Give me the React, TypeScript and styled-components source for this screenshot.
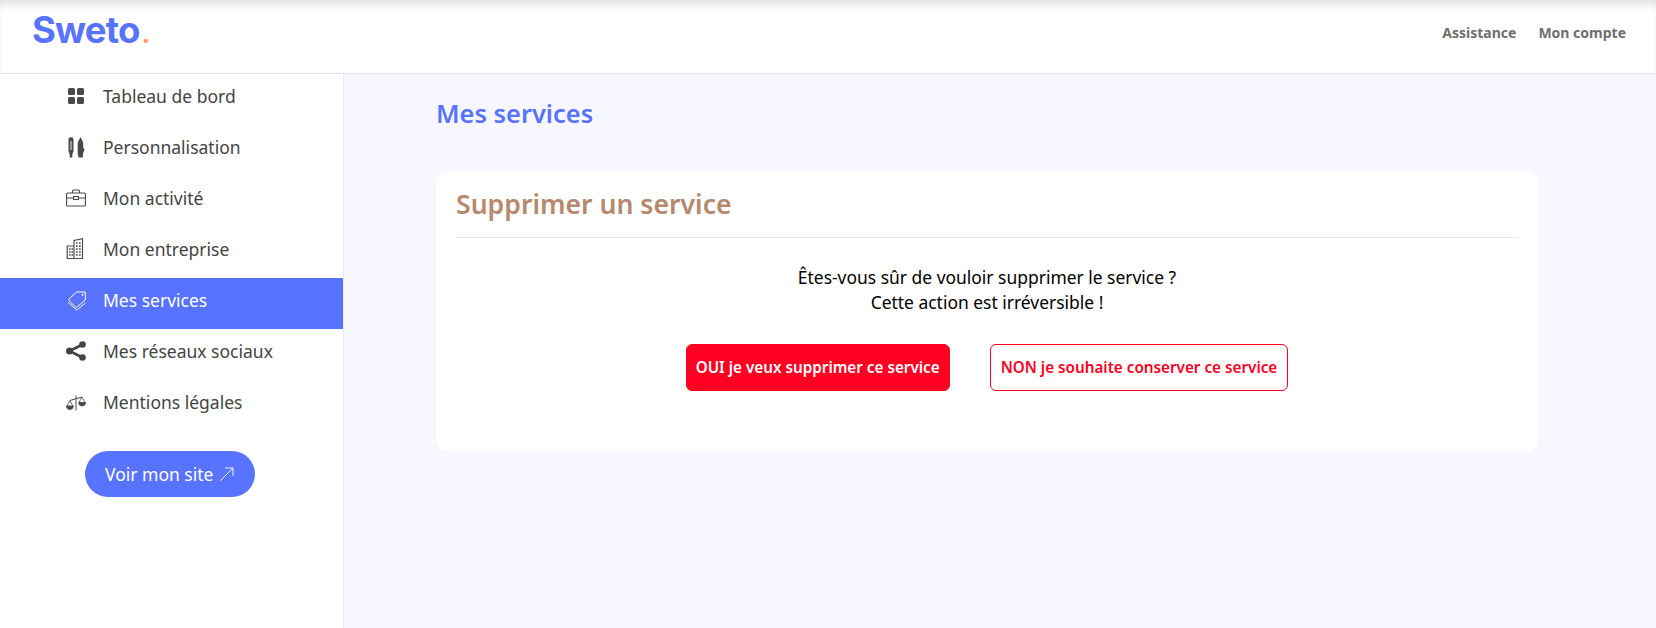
import React from "react";
import styled, { createGlobalStyle } from "styled-components";

const Global = createGlobalStyle`
  html, body { margin: 0; padding: 0; height: 100%; background: #f6f7ff; }
  body { font-family: "Noto Sans", "Open Sans", sans-serif; }
  #root { height: 100%; }
  * { box-sizing: border-box; }
`;

const Page = styled.div`
  width: 1656px;
  height: 628px;
  display: flex;
  flex-direction: column;
  overflow: hidden;
  background: #f6f7ff;
`;
const Header = styled.header`
  height: 74px;
  flex: none;
  background: #fff;
  border-bottom: 1px solid #e4e4e8;
  box-shadow: inset 0 8px 10px -4px rgba(0, 0, 0, 0.14);
  display: flex;
  align-items: center;
  justify-content: space-between;
  padding: 0 30px 10px 32px;
`;
const Logo = styled.div`
  font-family: "Inter", sans-serif;
  font-weight: 700;
  font-size: 36.5px;
  line-height: 40px;
  letter-spacing: -0.8px;
  color: #5773ff;
  span { color: #ff9a5c; font-size: 26px; letter-spacing: 0; margin-left: 2px; }
`;
const TopNav = styled.nav`
  display: flex;
  gap: 22px;
  padding-top: 1px;
`;
const TopLink = styled.a`
  font-size: 14px;
  font-weight: 700;
  color: #6f6f6f;
`;
const Body = styled.div`
  flex: 1;
  display: flex;
  min-height: 0;
`;
const Sidebar = styled.aside`
  width: 344px;
  flex: none;
  background: #fff;
  border-right: 1px solid #e9eaf6;
  display: flex;
  flex-direction: column;
`;
const Item = styled.a<{ $active?: boolean }>`
  height: 51px;
  display: flex;
  align-items: center;
  padding: 0 0 7px 66px;
  font-size: 17.5px;
  font-weight: 400;
  color: ${(p) => (p.$active ? "#fff" : "#444")};
  background: ${(p) => (p.$active ? "#5773ff" : "transparent")};
`;
const IconSlot = styled.span`
  width: 37px;
  flex: none;
  display: flex;
  svg { display: block; }
`;
const SiteButton = styled.a`
  align-self: flex-start;
  margin: 20px 0 0 85px;
  width: 170px;
  height: 46px;
  border-radius: 23px;
  background: #5773ff;
  color: #fff;
  font-size: 17.5px;
  font-weight: 400;
  display: flex;
  align-items: center;
  gap: 6px;
  padding-left: 20px;
`;
const Main = styled.main`
  flex: 1;
  padding: 20px 118px 0 92px;
`;
const PageTitle = styled.h1`
  margin: 0 0 32px;
  height: 45px;
  font-size: 25.4px;
  line-height: 38px;
  font-weight: 600;
  color: #5773ff;
`;
const Card = styled.section`
  height: 280px;
  background: #fff;
  border-radius: 12px;
  padding: 0 20px;
  display: flex;
  flex-direction: column;
`;
const CardTitle = styled.h2`
  margin: 0;
  height: 67px;
  border-bottom: 1px solid #e8e8e8;
  font-size: 26.6px;
  line-height: 66px;
  font-weight: 600;
  color: #b6886e;
`;
const Message = styled.p`
  margin: 27px 0 0;
  text-align: center;
  font-size: 17.45px;
  line-height: 25px;
  color: #000;
`;
const Actions = styled.div`
  display: flex;
  justify-content: center;
  gap: 40px;
  margin-top: 29px;
`;
const Action = styled.button<{ $filled?: boolean }>`
  height: 47px;
  padding: 0 ${(p) => (p.$filled ? "9px" : "10px")} 1px;
  border-radius: 6px;
  border: 1px solid #ff0023;
  background: ${(p) => (p.$filled ? "#ff0023" : "#fff")};
  color: ${(p) => (p.$filled ? "#fff" : "#ff0023")};
  font-family: inherit;
  font-size: 15.25px;
  font-weight: 600;
  white-space: nowrap;
`;

const Grid = () => (
  <svg width="20" height="20" viewBox="0 0 20 20" fill="#4a4a4a">
    <rect x="2" y="2" width="7" height="7" rx="1.500" />
    <rect x="11" y="2" width="7" height="7" rx="1.500" />
    <rect x="2" y="11" width="7" height="7" rx="1.500" />
    <rect x="11" y="11" width="7" height="7" rx="1.500" />
  </svg>
);
const Pens = () => (
  <svg width="20" height="22" viewBox="0 -0.500 20 22" fill="#4a4a4a">
    <path d="M2.500 3C2.500 1.500 3.500 .8 5 .8s2.500.7 2.500 2.200v11.500L6.300 18v3H3.700v-3L2.500 14.500z" />
    <path d="M4 4.500h2v9H4z" fill="#9a9a9a" />
    <path d="M14.500 .5l2.700 5.500V11l1.300 2-1.300 3.500-.5 4.500h-4.200l-.8-4V6z" />
  </svg>
);
const Briefcase = () => (
  <svg width="20" height="18" viewBox="0 0 20 18" fill="none" stroke="#4a4a4a" strokeWidth="1.100">
    <rect x="0.600" y="4" width="18.800" height="13" rx="1" />
    <path d="M6.500 4V2a1 1 0 0 1 1-1h5a1 1 0 0 1 1 1v2M0.600 9h7M12.400 9h7" />
    <rect x="7.600" y="7.500" width="4.800" height="3" />
  </svg>
);
const Building = () => (
  <svg width="18" height="22" viewBox="0 0 18 22" fill="none" stroke="#4f4f4f" strokeWidth="1.200">
    <path d="M8 20.500V2.500L16.500 0.700V20.500z" />
    <path d="M8 8H1.200v12.500H16.500" />
    <path d="M10 5h1.700M13 5h1.700M10 8h1.700M13 8h1.700M10 11h1.700M13 11h1.700M10 14h1.700M13 14h1.700M10 17h1.700M13 17h1.700M3 11h1.600M5.500 11h1.600M3 14h1.600M5.500 14h1.600M3 17h1.600M5.500 17h1.600" strokeWidth="1.700" />
  </svg>
);
const Tags = () => (
  <svg width="21" height="23" viewBox="-1 -2 21 23" fill="none" stroke="#fff" strokeWidth="1">
    <path d="M9.500 1H18.300V9L10 16a1 1 0 0 1-1.400 0L2 9.500a1 1 0 0 1 0-1.400z" />
    <path d="M1.200 11.500l8 7a1 1 0 0 0 1.400 0l7.700-6.500" />
    <circle cx="15.500" cy="3.800" r=".6" fill="#fff" />
  </svg>
);
const Share = () => (
  <svg width="20" height="20" viewBox="0 0 20 20" fill="#444">
    <circle cx="3.500" cy="10" r="3.500" />
    <circle cx="16.500" cy="3.500" r="3.300" />
    <circle cx="16.500" cy="16.500" r="3.300" />
    <path d="M3.500 10L16.500 3.500M3.500 10l13 6.500" stroke="#444" strokeWidth="2.600" fill="none" />
  </svg>
);
const Scale = () => (
  <svg width="20" height="18" viewBox="0 -2 20 18" fill="none" stroke="#4a4a4a" strokeWidth="1">
    <path d="M10 0.500V15.500M3.900 5.500L16 2" />
    <path d="M0.500 11a3.400 3.400 0 0 0 6.800 0zM12.700 7.500a3.400 3.400 0 0 0 6.800 0z" fill="#4a4a4a" />
    <path d="M3.900 5.500L1 11M3.900 5.500l3 5.500M16 2l-3 5.500M16 2l3 5.500" strokeWidth=".8" />
  </svg>
);
const Arrow = () => (
  <svg width="15" height="15" viewBox="0 0 15 15" fill="none" stroke="#fff" strokeWidth=".9">
    <path d="M1 14L14 1M6 1h8v8" />
  </svg>
);

const items: { label: string; icon: React.ReactNode; active?: boolean }[] = [
  { label: "Tableau de bord", icon: <Grid /> },
  { label: "Personnalisation", icon: <Pens /> },
  { label: "Mon activité", icon: <Briefcase /> },
  { label: "Mon entreprise", icon: <Building /> },
  { label: "Mes services", icon: <Tags />, active: true },
  { label: "Mes réseaux sociaux", icon: <Share /> },
  { label: "Mentions légales", icon: <Scale /> },
];

export default function App() {
  return (
    <Page>
      <Global />
      <Header>
        <Logo>
          Sweto<span>.</span>
        </Logo>
        <TopNav>
          <TopLink>Assistance</TopLink>
          <TopLink>Mon compte</TopLink>
        </TopNav>
      </Header>
      <Body>
        <Sidebar>
          {items.map((it) => (
            <Item key={it.label} $active={it.active}>
              <IconSlot>{it.icon}</IconSlot>
              {it.label}
            </Item>
          ))}
          <SiteButton>
            Voir mon site <Arrow />
          </SiteButton>
        </Sidebar>
        <Main>
          <PageTitle>Mes services</PageTitle>
          <Card>
            <CardTitle>Supprimer un service</CardTitle>
            <Message>
              Êtes-vous sûr de vouloir supprimer le service ?
              <br />
              Cette action est irréversible !
            </Message>
            <Actions>
              <Action $filled>OUI je veux supprimer ce service</Action>
              <Action>NON je souhaite conserver ce service</Action>
            </Actions>
          </Card>
        </Main>
      </Body>
    </Page>
  );
}
